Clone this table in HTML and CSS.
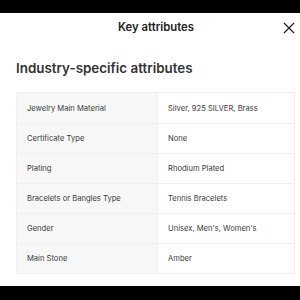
FILE: index.html
```html
<!DOCTYPE html>
<html>
<head>
<meta charset="utf-8">
<link rel="stylesheet" href="styles.css">
</head>
<body>
<div class="topbar"></div>
<div class="sheet">
  <div class="header">
    <div class="title">Key attributes</div>
    <svg class="close" width="12" height="12" viewBox="0 0 12 12"><path d="M1 1L11 11M11 1L1 11" stroke="#222" stroke-width="1.3" fill="none"/></svg>
  </div>
  <h2 class="section">Industry-specific attributes</h2>
  <div class="table">
    <div class="row"><div class="k">Jewelry Main Material</div><div class="v">Silver, 925 SILVER, Brass</div></div>
    <div class="row"><div class="k">Certificate Type</div><div class="v">None</div></div>
    <div class="row"><div class="k">Plating</div><div class="v">Rhodium Plated</div></div>
    <div class="row"><div class="k">Bracelets or Bangles Type</div><div class="v">Tennis Bracelets</div></div>
    <div class="row"><div class="k">Gender</div><div class="v">Unisex, Men's, Women's</div></div>
    <div class="row"><div class="k">Main Stone</div><div class="v">Amber</div></div>
  </div>
</div>
<div class="bottombar"></div>
</body>
</html>
```
FILE: styles.css
```css
* { box-sizing: border-box; }
html, body { margin: 0; padding: 0; }
body { width: 300px; height: 300px; background: #000; font-family: Inter, "Noto Sans", sans-serif; color: #222; overflow: hidden; display: flex; flex-direction: column; }
.topbar { height: 13px; background: #000; flex: none; }
.sheet { background: #fff; height: 273px; flex: none; padding: 0 5px 0 16px; }
.header { height: 28px; display: flex; align-items: center; justify-content: center; position: relative; margin-right: -5px; margin-left: -16px; }
.title { font-size: 11.3px; font-weight: 600; color: #222; margin-left: 12px; }
.close { position: absolute; right: 5px; top: 9px; }
.section { margin: 0; padding-top: 17px; height: 51px; font-size: 13.4px; font-weight: 600; color: #333; line-height: 20px; }
.table { border: 1px solid #f0f0f0; }
.row { display: grid; grid-template-columns: 140px 1fr; height: 30px; border-top: 1px solid #f0f0f0; }
.row:first-child { border-top: none; }
.k { background: #f7f7f7; padding-left: 10px; display: flex; align-items: center; font-size: 7.6px; color: #3a3a3a; }
.v { background: #fff; padding-left: 10px; display: flex; align-items: center; font-size: 7.6px; color: #3a3a3a; border-left: 1px solid #f0f0f0; }
.bottombar { flex: 1; background: #000; }
```
